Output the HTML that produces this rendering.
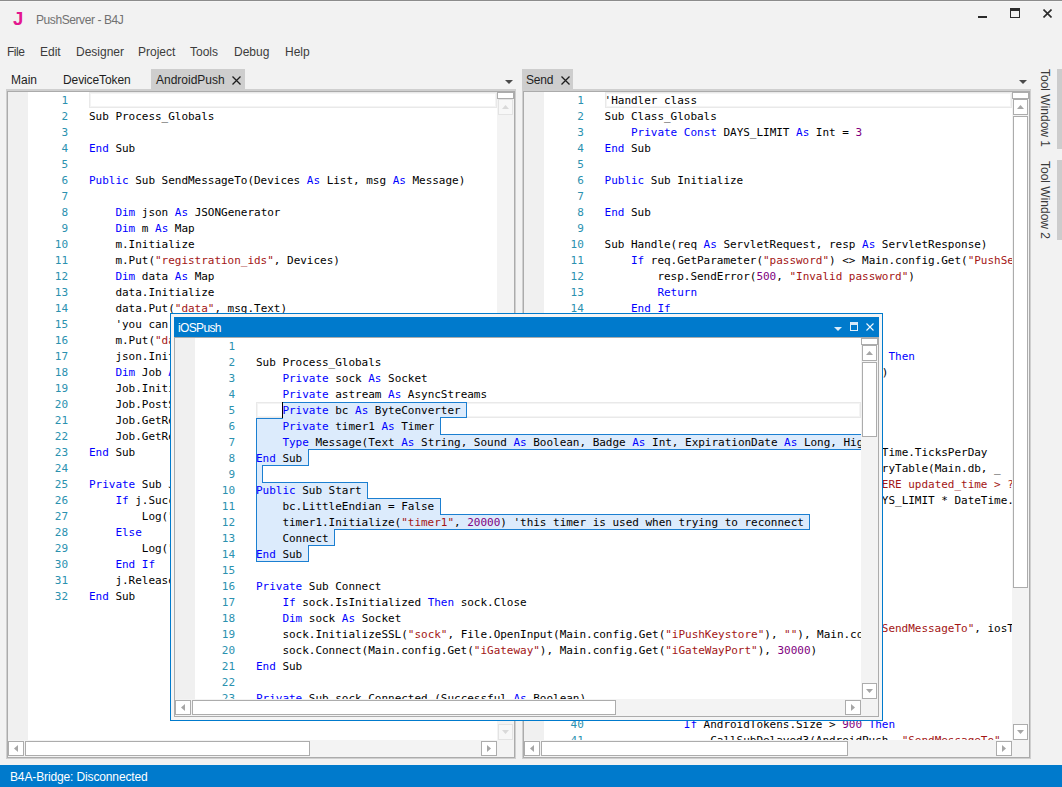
<!DOCTYPE html>
<html lang="en"><head><meta charset="utf-8"><title>PushServer - B4J</title>
<style>
*{box-sizing:border-box;margin:0;padding:0}
html,body{width:1062px;height:787px;overflow:hidden;background:#f2f2f2}
body{font-family:"Liberation Sans",sans-serif;font-size:12px;color:#1e1e1e;position:relative}
i{font-style:normal}
.abs{position:absolute}
#top{position:absolute;left:0;top:0;width:1062px;height:1px;background:#8c8c8c}
#top2{position:absolute;left:0;top:1px;width:1062px;height:1px;background:#f6f6f6}
.t{position:absolute;white-space:nowrap;line-height:16px;height:16px}
.tab{position:absolute;top:69px;height:21px;background:#cecece}
.panel{position:absolute;background:#cfcfcf;padding:2px 1px 1px 1px}
.panel>div{width:100%;height:100%;border:1px solid #ababab}
.ed{position:absolute;background:#f3f3f3;overflow:hidden}
.ta{position:absolute;left:0;top:0;background:#fff;overflow:hidden}
.gut{position:absolute;left:0;top:0;bottom:0;background:#f0f0f0}
.cur{position:absolute;height:16px;border:1px solid #e9e9e9;box-shadow:inset 0 0 0 1px #f4f4f4}
pre{position:absolute;top:1px;font-family:"DejaVu Sans Mono","Liberation Mono",monospace;font-size:11px;line-height:16px;letter-spacing:-0.022px;color:#000;white-space:pre}
pre.ln{left:0;text-align:right;color:#2b91af}
.k{color:#0000ff}.s{color:#a31515}.n{color:#800080}
.vsb{position:absolute;top:0;width:17px;background:#f3f3f3}
.hsb{position:absolute;left:0;height:17px;background:#f3f3f3}
.corner{position:absolute;width:17px;height:17px;background:#f3f3f3}
.split{position:absolute;left:0;top:0;width:17px;height:7px;background:#fff;border:1px solid #acacac}
.btn{position:absolute;width:15px;height:15px;background:#fff;border:1px solid #acacac;display:flex;align-items:center;justify-content:center}
.btn.dis{background:#f7f7f7;border-color:#e3e3e3}
.thumb{position:absolute;background:#fff;border:1px solid #acacac}
.sel{position:absolute;left:0;top:0}
.caret{position:absolute;width:1px;height:16px;background:#000}
#status{position:absolute;left:0;top:765px;width:1062px;height:22px;background:#007acc;color:#fff}
.tw{position:absolute;left:1057px;width:5px;background:#cccccc}
.twt{position:absolute;color:#3a3a3a;white-space:nowrap;transform-origin:0 0;transform:rotate(90deg);line-height:16px;height:16px}
#fl{position:absolute;left:170px;top:313px;width:713px;height:408px;border:1px solid #007acc;background:#f5f5f5}
#flt{position:absolute;left:3px;top:3px;width:705px;height:20px;background:#007acc;color:#fff}
#fle{position:absolute;left:3px;top:23px;width:705px;height:380px;border:1px solid #acacac;background:#fff}
</style></head>
<body>
<div id="top"></div><div id="top2"></div>
<div class="t" style="left:13px;top:9px;font-weight:bold;font-size:18.5px;color:#e3168f;line-height:20px;height:20px">J</div>
<div class="t" style="left:36px;top:12px;color:#717171;letter-spacing:-0.42px">PushServer - B4J</div>
<div class="abs" style="left:978px;top:16px;width:9px;height:2px;background:#2b2b2b"></div>
<div class="abs" style="left:1010px;top:8px;width:10px;height:10px;border:1px solid #2b2b2b;border-top-width:3px"></div>
<svg class="abs" style="left:1043px;top:8.5px" width="9" height="9" viewBox="0 0 9 9"><path d="M0.5 0.5 L8.5 8.5 M8.5 0.5 L0.5 8.5" stroke="#2b2b2b" stroke-width="1.6" fill="none"/></svg>
<div class="t" style="left:7px;top:44px;color:#3c3c3c;letter-spacing:-0.5px">File</div>
<div class="t" style="left:40px;top:44px;color:#3c3c3c">Edit</div>
<div class="t" style="left:76px;top:44px;color:#3c3c3c">Designer</div>
<div class="t" style="left:138px;top:44px;color:#3c3c3c">Project</div>
<div class="t" style="left:190px;top:44px;color:#3c3c3c">Tools</div>
<div class="t" style="left:234px;top:44px;color:#3c3c3c">Debug</div>
<div class="t" style="left:285px;top:44px;color:#3c3c3c">Help</div>
<div class="t" style="left:11px;top:72px">Main</div>
<div class="t" style="left:63px;top:72px;letter-spacing:-0.1px">DeviceToken</div>
<div class="tab" style="left:151px;width:94px"></div>
<div class="t" style="left:156px;top:72px">AndroidPush</div>
<svg class="abs" style="left:231.5px;top:75.5px" width="9" height="9" viewBox="0 0 9 9"><path d="M0.5 0.5 L8.5 8.5 M8.5 0.5 L0.5 8.5" stroke="#1e1e1e" stroke-width="1.25" fill="none"/></svg>
<svg class="abs" style="left:505px;top:80px" width="8" height="4"><path d="M0 0 L8 0 L4 4 Z" fill="#4a4a4a"/></svg>
<div class="tab" style="left:522px;width:51px"></div>
<div class="t" style="left:526px;top:72px;letter-spacing:-0.2px">Send</div>
<svg class="abs" style="left:560.5px;top:75.5px" width="9" height="9" viewBox="0 0 9 9"><path d="M0.5 0.5 L8.5 8.5 M8.5 0.5 L0.5 8.5" stroke="#1e1e1e" stroke-width="1.25" fill="none"/></svg>
<svg class="abs" style="left:1019px;top:80px" width="8" height="4"><path d="M0 0 L8 0 L4 4 Z" fill="#4a4a4a"/></svg>
<div class="panel" style="left:6px;top:89px;width:510px;height:670px"><div></div></div>
<div class="ed" style="left:8px;top:92px;width:506px;height:665px">
<div class="ta" style="width:489px;height:648px">
<div class="gut" style="width:20px"></div>
<div class="cur" style="left:81px;top:0px;width:408px"></div>

<pre class="ln" style="width:60.0px">
1
2
3
4
5
6
7
8
9
10
11
12
13
14
15
16
17
18
19
20
21
22
23
24
25
26
27
28
29
30
31
32</pre>
<pre class="code" style="left:81px">

Sub Process_Globals

<i class="k">End</i> Sub

<i class="k">Public</i> Sub SendMessageTo(Devices <i class="k">As</i> List, msg <i class="k">As</i> Message)

    <i class="k">Dim</i> json <i class="k">As</i> JSONGenerator
    <i class="k">Dim</i> m <i class="k">As</i> Map
    m.Initialize
    m.Put(<i class="s">"registration_ids"</i>, Devices)
    <i class="k">Dim</i> data <i class="k">As</i> Map
    data.Initialize
    data.Put(<i class="s">"data"</i>, msg.Text)
    'you can add more fields here
    m.Put(<i class="s">"data"</i>, data)
    json.Initialize(m)
    <i class="k">Dim</i> Job <i class="k">As</i> PushJob
    Job.Initialize(<i class="s">"send message"</i>, Me)
    Job.PostString(Main.config.Get(<i class="s">"AndroidGateway"</i>), json.ToString)
    Job.GetRequest.SetContentType(<i class="s">"application/json"</i>)
    Job.GetRequest.SetHeader(<i class="s">"Authorization"</i>, <i class="s">"key="</i> &amp; Main.config.Get(<i class="s">"AndroidApiKey"</i>))
<i class="k">End</i> Sub

<i class="k">Private</i> Sub JobDone(j <i class="k">As</i> PushJob)
    <i class="k">If</i> j.Success <i class="k">Then</i>
        Log(<i class="s">"Success: "</i> &amp; j.GetString)
    <i class="k">Else</i>
        Log(<i class="s">"Error: "</i> &amp; j.ErrorMessage)
    <i class="k">End</i> <i class="k">If</i>
    j.Release
<i class="k">End</i> Sub</pre>
</div>
<div class="vsb" style="left:489px;height:648px">
<div class="split"></div>
<div class="btn dis" style="left:1px;top:7px;height:16px"><svg width="7" height="4" viewBox="0 0 7 4"><path d="M0 4 L3.5 0 L7 4 Z" fill="#d9d9d9"/></svg></div>
<div class="btn dis" style="left:1px;top:632px;height:16px"><svg width="7" height="4" viewBox="0 0 7 4"><path d="M0 0 L7 0 L3.5 4 Z" fill="#d9d9d9"/></svg></div>
</div>
<div class="hsb" style="top:648px;width:489px">
<div class="btn" style="left:0px;top:1px;width:16px"><svg width="4" height="7" viewBox="0 0 4 7"><path d="M4 0 L4 7 L0 3.5 Z" fill="#a6a6a6"/></svg></div>
<div class="thumb" style="left:17px;top:1px;width:285px;height:15px"></div>
<div class="btn" style="left:473px;top:1px;width:16px"><svg width="4" height="7" viewBox="0 0 4 7"><path d="M0 0 L4 3.5 L0 7 Z" fill="#a6a6a6"/></svg></div>
</div>
<div class="corner" style="left:489px;top:648px"></div>
</div>
<div class="panel" style="left:522px;top:89px;width:509px;height:670px"><div></div></div>
<div class="ed" style="left:524px;top:92px;width:505px;height:665px">
<div class="ta" style="width:488px;height:648px">
<div class="gut" style="width:20px"></div>
<div class="cur" style="left:81px;top:0px;width:407px"></div>

<pre class="ln" style="width:59.8px">
1
2
3
4
5
6
7
8
9
10
11
12
13
14
15
16
17
18
19
20
21
22
23
24
25
26
27
28
29
30
31
32
33
34
35
36
37
38
39
40
41</pre>
<pre class="code" style="left:80.6px">
'Handler class
Sub Class_Globals
    <i class="k">Private</i> <i class="k">Const</i> DAYS_LIMIT <i class="k">As</i> Int = <i class="n">3</i>
<i class="k">End</i> Sub

<i class="k">Public</i> Sub Initialize

<i class="k">End</i> Sub

Sub Handle(req <i class="k">As</i> ServletRequest, resp <i class="k">As</i> ServletResponse)
    <i class="k">If</i> req.GetParameter(<i class="s">"password"</i>) &lt;&gt; Main.config.Get(<i class="s">"PushServerPassword"</i>) <i class="k">Then</i>
        resp.SendError(<i class="n">500</i>, <i class="s">"Invalid password"</i>)
        <i class="k">Return</i>
    <i class="k">End</i> <i class="k">If</i>
    <i class="k">Dim</i> msg <i class="k">As</i> Message
    msg.Text = req.GetParameter(<i class="s">"text"</i>)
    <i class="k">If</i> req.GetParameter(<i class="s">"ios"</i>) = True      <i class="k">Then</i>
        msg.Badge = req.GetParameter(<i class="s">"b"</i>  )
    <i class="k">End</i> <i class="k">If</i>
    msg.Sound = True

    'find tokens that are still valid
    <i class="k">Dim</i> limit <i class="k">As</i> Long = DAYS_LIMIT *  DateTime.TicksPerDay
    <i class="k">Dim</i> rows <i class="k">As</i> List = DBUtils.ExecuteMemoryTable(Main.db, _
        <i class="s">"SELECT token, type FROM tokens WHERE updated_time &gt; ?"</i>, _
         Array <i class="k">As</i> Object(DateTime.Now - DAYS_LIMIT * DateTime.TicksPerDay), <i class="n">0</i>)
    <i class="k">Dim</i> iosTokens <i class="k">As</i> List
    iosTokens.Initialize
    <i class="k">Dim</i> AndroidTokens <i class="k">As</i> List
    AndroidTokens.Initialize
    <i class="k">For</i> <i class="k">Each</i> r() <i class="k">As</i> String <i class="k">In</i> rows
        <i class="k">If</i> r(<i class="n">1</i>) = <i class="n">1</i> <i class="k">Then</i>
            <i class="k">If</i> iosTokens.Size &gt; <i class="n">900</i> <i class="k">Then</i>
                CallSubDelayed3(iOSPush, <i class="s">"SendMessageTo"</i>, iosTokens, msg)
                iosTokens.Initialize
            <i class="k">End</i> <i class="k">If</i>
            iosTokens.Add(r(<i class="n">0</i>))
        <i class="k">Else</i>
            AndroidTokens.Add(r(<i class="n">0</i>))
            <i class="k">If</i> AndroidTokens.Size &gt; <i class="n">900</i> <i class="k">Then</i>
                CallSubDelayed3(AndroidPush, <i class="s">"SendMessageTo"</i>, AndroidTokens, msg)</pre>
</div>
<div class="vsb" style="left:488px;height:648px">
<div class="split"></div>
<div class="btn" style="left:1px;top:7px;height:16px"><svg width="7" height="4" viewBox="0 0 7 4"><path d="M0 4 L3.5 0 L7 4 Z" fill="#a6a6a6"/></svg></div>
<div class="thumb" style="left:1px;top:24px;width:15px;height:472px"></div>
<div class="btn" style="left:1px;top:632px;height:16px"><svg width="7" height="4" viewBox="0 0 7 4"><path d="M0 0 L7 0 L3.5 4 Z" fill="#a6a6a6"/></svg></div>
</div>
<div class="hsb" style="top:648px;width:488px">
<div class="btn" style="left:0px;top:1px;width:16px"><svg width="4" height="7" viewBox="0 0 4 7"><path d="M4 0 L4 7 L0 3.5 Z" fill="#a6a6a6"/></svg></div>
<div class="thumb" style="left:17px;top:1px;width:307px;height:15px"></div>
<div class="btn" style="left:472px;top:1px;width:16px"><svg width="4" height="7" viewBox="0 0 4 7"><path d="M0 0 L4 3.5 L0 7 Z" fill="#a6a6a6"/></svg></div>
</div>
<div class="corner" style="left:488px;top:648px"></div>
</div>
<div class="tw" style="top:69px;height:80px"></div>
<div class="tw" style="top:160px;height:80px"></div>
<div class="twt" style="left:1053px;top:69px">Tool Window 1</div>
<div class="twt" style="left:1053px;top:161px">Tool Window 2</div>
<div id="fl">
<div id="flt"><div class="t" style="left:4px;top:3px;color:#fff;letter-spacing:-0.65px">iOSPush</div>
<svg class="abs" style="left:660px;top:10px" width="8" height="4"><path d="M0 0 L8 0 L4 4 Z" fill="#dcecf9"/></svg>
<div class="abs" style="left:676px;top:5px;width:8px;height:9px;border:1px solid #e3f0fa;border-top:3px solid #d6e9f8"></div>
<svg class="abs" style="left:692px;top:6px" width="8" height="8" viewBox="0 0 8 8"><path d="M0.5 0.5 L7.5 7.5 M7.5 0.5 L0.5 7.5" stroke="#f2f8fd" stroke-width="1.1" fill="none"/></svg>
</div>
<div id="fle"></div>
</div>
<div class="ed" style="left:175px;top:338px;width:703px;height:378px">
<div class="ta" style="width:686px;height:361px">
<div class="gut" style="width:20px"></div>
<div class="cur" style="left:81px;top:64px;width:605px"></div>
<svg class="sel" width="686" height="256" viewBox="0 0 686 256"><defs><clipPath id="selclip"><path d="M107 64 L292 64 L292 80 L266 80 L266 96 L691 96 L691 112 L134 112 L134 128 L88 128 L88 144 L193 144 L193 160 L266 160 L266 176 L635 176 L635 192 L160 192 L160 208 L134 208 L134 224 L81 224 L81 80 L107 80 Z"/></clipPath></defs><path d="M107 64 L292 64 L292 80 L266 80 L266 96 L691 96 L691 112 L134 112 L134 128 L88 128 L88 144 L193 144 L193 160 L266 160 L266 176 L635 176 L635 192 L160 192 L160 208 L134 208 L134 224 L81 224 L81 80 L107 80 Z" fill="#dcebfc" stroke="#1b7fd1" stroke-width="2" stroke-linejoin="miter" clip-path="url(#selclip)"/></svg><div class="caret" style="left:107px;top:64px"></div>
<pre class="ln" style="width:60.0px">
1
2
3
4
5
6
7
8
9
10
11
12
13
14
15
16
17
18
19
20
21
22
23</pre>
<pre class="code" style="left:81px">

Sub Process_Globals
    <i class="k">Private</i> sock <i class="k">As</i> Socket
    <i class="k">Private</i> astream <i class="k">As</i> AsyncStreams
    <i class="k">Private</i> bc <i class="k">As</i> ByteConverter
    <i class="k">Private</i> timer1 <i class="k">As</i> Timer
    <i class="k">Type</i> Message(Text <i class="k">As</i> String, Sound <i class="k">As</i> Boolean, Badge <i class="k">As</i> Int, ExpirationDate <i class="k">As</i> Long, HighPriority <i class="k">As</i> Boolean)
<i class="k">End</i> Sub

<i class="k">Public</i> Sub Start
    bc.LittleEndian = False
    timer1.Initialize(<i class="s">"timer1"</i>, <i class="n">20000</i>) 'this timer is used when trying to reconnect
    Connect
<i class="k">End</i> Sub

<i class="k">Private</i> Sub Connect
    <i class="k">If</i> sock.IsInitialized <i class="k">Then</i> sock.Close
    <i class="k">Dim</i> sock <i class="k">As</i> Socket
    sock.InitializeSSL(<i class="s">"sock"</i>, File.OpenInput(Main.config.Get(<i class="s">"iPushKeystore"</i>), <i class="s">""</i>), Main.config.Get(<i class="s">"iPushKeystorePassword"</i>))
    sock.Connect(Main.config.Get(<i class="s">"iGateway"</i>), Main.config.Get(<i class="s">"iGateWayPort"</i>), <i class="n">30000</i>)
<i class="k">End</i> Sub

<i class="k">Private</i> Sub sock_Connected (Successful <i class="k">As</i> Boolean)</pre>
</div>
<div class="vsb" style="left:686px;height:361px">
<div class="split"></div>
<div class="btn" style="left:1px;top:7px;height:16px"><svg width="7" height="4" viewBox="0 0 7 4"><path d="M0 4 L3.5 0 L7 4 Z" fill="#a6a6a6"/></svg></div>
<div class="thumb" style="left:1px;top:24px;width:15px;height:75px"></div>
<div class="btn" style="left:1px;top:345px;height:16px"><svg width="7" height="4" viewBox="0 0 7 4"><path d="M0 0 L7 0 L3.5 4 Z" fill="#a6a6a6"/></svg></div>
</div>
<div class="hsb" style="top:361px;width:686px">
<div class="btn" style="left:0px;top:1px;width:16px"><svg width="4" height="7" viewBox="0 0 4 7"><path d="M4 0 L4 7 L0 3.5 Z" fill="#a6a6a6"/></svg></div>
<div class="thumb" style="left:17px;top:1px;width:424px;height:15px"></div>
<div class="btn" style="left:670px;top:1px;width:16px"><svg width="4" height="7" viewBox="0 0 4 7"><path d="M0 0 L4 3.5 L0 7 Z" fill="#a6a6a6"/></svg></div>
</div>
<div class="corner" style="left:686px;top:361px"></div>
</div>
<div id="status"><div class="t" style="left:10px;top:4px;color:#fff;letter-spacing:-0.13px">B4A-Bridge: Disconnected</div></div>
</body></html>
